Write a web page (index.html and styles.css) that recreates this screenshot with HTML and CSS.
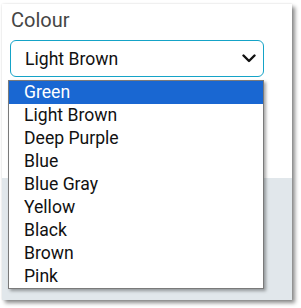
FILE: index.html
```html
<!DOCTYPE html>
<html>
<head>
<meta charset="utf-8">
<link rel="stylesheet" href="styles.css">
</head>
<body>
<div class="card">
  <div class="top">
    <div class="label">Colour</div>
    <div class="select">
      <span class="value">Light Brown</span>
      <svg class="chev" width="14" height="9" viewBox="0 0 14 9"><path d="M1.5 1.5 L7 7 L12.5 1.5" fill="none" stroke="#111" stroke-width="2.4" stroke-linecap="round" stroke-linejoin="round"/></svg>
    </div>
  </div>
  <div class="bottom"></div>
  <ul class="list">
    <li class="sel">Green</li>
    <li>Light Brown</li>
    <li>Deep Purple</li>
    <li>Blue</li>
    <li>Blue Gray</li>
    <li>Yellow</li>
    <li>Black</li>
    <li>Brown</li>
    <li>Pink</li>
  </ul>
</div>
</body>
</html>
```
FILE: styles.css
```css
html, body {
  margin: 0;
  padding: 0;
  background: #fff;
}
body {
  font-family: Roboto, "Liberation Sans", sans-serif;
  width: 301px;
  height: 308px;
  overflow: hidden;
}
.card {
  position: relative;
  margin: 4px 0 0 2px;
  width: 290px;
  height: 296px;
  background: #fff;
  box-shadow: 3px 3px 4px rgba(0, 0, 0, 0.45), 0 0 2px rgba(0, 0, 0, 0.12);
  display: flex;
  flex-direction: column;
}
.top {
  height: 174px;
  padding: 5px 0 0 8px;
  box-sizing: border-box;
}
.label {
  font-size: 20px;
  line-height: 23px;
  color: #454545;
  margin-left: 1px;
}
.select {
  margin-top: 8px;
  width: 254px;
  height: 37px;
  box-sizing: border-box;
  border: 1px solid #15a3c7;
  border-radius: 6px;
  display: flex;
  align-items: center;
  justify-content: space-between;
  padding: 0 7px 0 14px;
  font-size: 17.6px;
  color: #111;
}
.chev {
  display: block;
}
.bottom {
  flex: 1;
  background: #e1e7eb;
}
.list {
  position: absolute;
  left: 6px;
  top: 76px;
  width: 256px;
  margin: 0;
  padding: 0;
  list-style: none;
  box-sizing: border-box;
  border: 1px solid #7a7a7a;
  background: #fff;
  box-shadow: 2px 2px 3px rgba(0, 0, 0, 0.35);
}
.list li {
  font-size: 17.6px;
  line-height: 19px;
  padding: 2px 0 2px 15px;
  color: #111;
}
.list li.sel {
  background: #1967d2;
  color: #fff;
}
```
